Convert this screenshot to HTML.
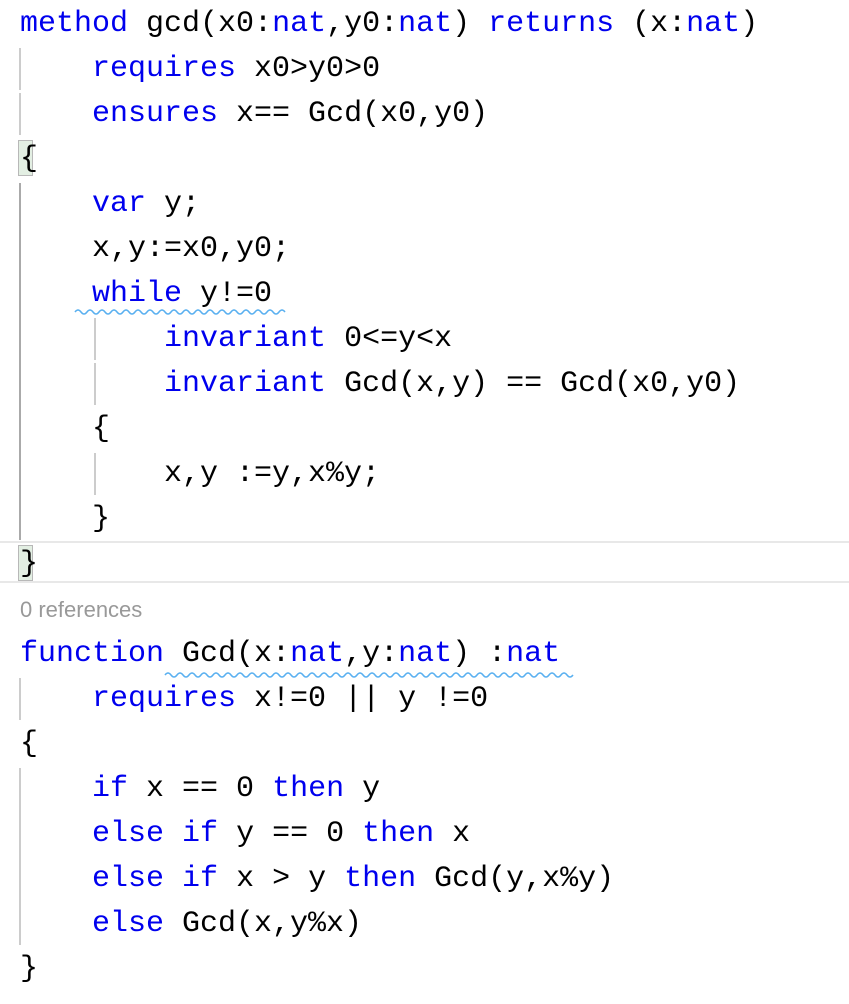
<!DOCTYPE html>
<html><head><meta charset="utf-8"><style>
html,body{margin:0;padding:0;background:#fff;width:849px;height:1004px;overflow:hidden;position:relative}
.l{position:absolute;left:20px;height:45px;line-height:45px;font-family:"Liberation Mono",monospace;font-size:30px;color:#000;white-space:pre;margin-top:2px}
.k{color:#0000ee}
.g{position:absolute;width:2px;background:#ccc}
.hl{position:absolute;left:0;width:849px;top:541px;height:42px;border-top:2px solid #e8e8e8;border-bottom:2px solid #e8e8e8;box-sizing:border-box}
.bb{position:absolute;width:15px;height:36px;background:#e3efe3;border:1px solid #b8b8b8;box-sizing:border-box}
</style></head><body>
<div class="hl"></div>
<div class="bb" style="left:18px;top:140px"></div>
<div class="bb" style="left:18px;top:545px"></div>
<div class="g" style="left:19px;top:48px;height:42px"></div>
<div class="g" style="left:19px;top:93px;height:42px"></div>
<div class="g" style="left:19px;top:183px;height:357px;background:#aaa"></div>
<div class="g" style="left:94px;top:318px;height:42px"></div>
<div class="g" style="left:94px;top:363px;height:42px"></div>
<div class="g" style="left:94px;top:453px;height:42px"></div>
<div class="g" style="left:19px;top:678px;height:42px"></div>
<div class="g" style="left:19px;top:768px;height:177px"></div>
<svg style="position:absolute;left:0;top:0" width="849" height="1004">
<path d="M75 312 q3 -4 6 0 t6 0 t6 0 t6 0 t6 0 t6 0 t6 0 t6 0 t6 0 t6 0 t6 0 t6 0 t6 0 t6 0 t6 0 t6 0 t6 0 t6 0 t6 0 t6 0 t6 0 t6 0 t6 0 t6 0 t6 0 t6 0 t6 0 t6 0 t6 0 t6 0 t6 0 t6 0 t6 0 t6 0 t6 0" fill="none" stroke="#5ab0f0" stroke-width="1.5"/>
<path d="M165 675 q3 -4 6 0 t6 0 t6 0 t6 0 t6 0 t6 0 t6 0 t6 0 t6 0 t6 0 t6 0 t6 0 t6 0 t6 0 t6 0 t6 0 t6 0 t6 0 t6 0 t6 0 t6 0 t6 0 t6 0 t6 0 t6 0 t6 0 t6 0 t6 0 t6 0 t6 0 t6 0 t6 0 t6 0 t6 0 t6 0 t6 0 t6 0 t6 0 t6 0 t6 0 t6 0 t6 0 t6 0 t6 0 t6 0 t6 0 t6 0 t6 0 t6 0 t6 0 t6 0 t6 0 t6 0 t6 0 t6 0 t6 0 t6 0 t6 0 t6 0 t6 0 t6 0 t6 0 t6 0 t6 0 t6 0 t6 0 t6 0 t6 0" fill="none" stroke="#5ab0f0" stroke-width="1.5"/>
</svg>
<div class="l" style="top:0px"><span class="k">method</span> gcd(x0:<span class="k">nat</span>,y0:<span class="k">nat</span>) <span class="k">returns</span> (x:<span class="k">nat</span>)</div>
<div class="l" style="top:45px">    <span class="k">requires</span> x0&gt;y0&gt;0</div>
<div class="l" style="top:90px">    <span class="k">ensures</span> x== Gcd(x0,y0)</div>
<div class="l" style="top:135px">{</div>
<div class="l" style="top:180px">    <span class="k">var</span> y;</div>
<div class="l" style="top:225px">    x,y:=x0,y0;</div>
<div class="l" style="top:270px">    <span class="k">while</span> y!=0</div>
<div class="l" style="top:315px">        <span class="k">invariant</span> 0&lt;=y&lt;x</div>
<div class="l" style="top:360px">        <span class="k">invariant</span> Gcd(x,y) == Gcd(x0,y0)</div>
<div class="l" style="top:405px">    {</div>
<div class="l" style="top:450px">        x,y :=y,x%y;</div>
<div class="l" style="top:495px">    }</div>
<div class="l" style="top:540px">}</div>
<div style="position:absolute;left:20px;top:596px;font-family:'Liberation Sans',sans-serif;font-size:22px;color:#999;line-height:28px">0 references</div>
<div class="l" style="top:630px"><span class="k">function</span> Gcd(x:<span class="k">nat</span>,y:<span class="k">nat</span>) :<span class="k">nat</span></div>
<div class="l" style="top:675px">    <span class="k">requires</span> x!=0 || y !=0</div>
<div class="l" style="top:720px">{</div>
<div class="l" style="top:765px">    <span class="k">if</span> x == 0 <span class="k">then</span> y</div>
<div class="l" style="top:810px">    <span class="k">else</span> <span class="k">if</span> y == 0 <span class="k">then</span> x</div>
<div class="l" style="top:855px">    <span class="k">else</span> <span class="k">if</span> x &gt; y <span class="k">then</span> Gcd(y,x%y)</div>
<div class="l" style="top:900px">    <span class="k">else</span> Gcd(x,y%x)</div>
<div class="l" style="top:945px">}</div>
</body></html>
